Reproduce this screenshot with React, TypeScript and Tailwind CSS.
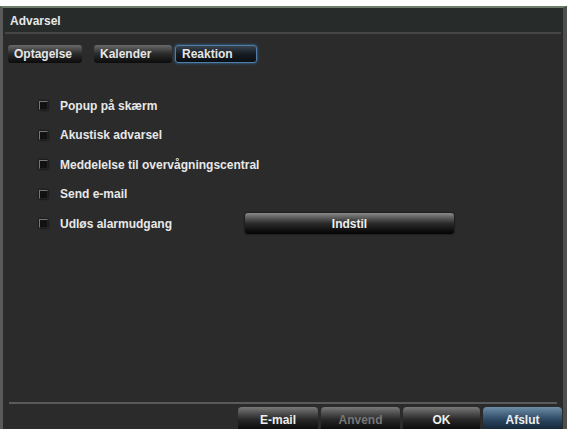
import React from "react";

const font = { fontFamily: '"Liberation Sans", Arial, sans-serif' };

function Check({ label }: { label: string }) {
  return (
    <div className="flex items-center h-[29.5px]">
      <div className="w-[9px] h-[9px] bg-[#111] border-t border-l border-[#777] border-r border-b border-r-[#222] border-b-[#222] shadow-[0_0_2px_#000]" />
      <span className="ml-[12px] text-[12px] font-bold text-[#e8e8e8]">{label}</span>
    </div>
  );
}

function Tab({ label, w, active }: { label: string; w: string; active?: boolean }) {
  return (
    <div
      className={
        w +
        " h-[18px] flex items-center pl-[6px] rounded-[3px] text-[12px] font-bold text-[#e6e6e6] " +
        (active
          ? "bg-gradient-to-b from-[#3a4450] via-[#161c22] to-[#0a0f14] border border-[#4f7fa8] shadow-[0_0_3px_#3a78b0]"
          : "bg-gradient-to-b from-[#6a6a6a] via-[#2a2a2a] to-[#0c0c0c]")
      }
    >
      {label}
    </div>
  );
}

function Btn({ label, w, variant }: { label: string; w: string; variant?: "dis" | "blue" }) {
  const bg =
    variant === "blue"
      ? "bg-gradient-to-b from-[#6f8ea8] via-[#2a4660] to-[#0e1c2a]"
      : "bg-gradient-to-b from-[#7a7a7a] via-[#262626] to-[#050505]";
  return (
    <div
      className={
        w +
        " h-[26px] rounded-t-[4px] flex items-center justify-center text-[12px] font-bold " +
        bg +
        (variant === "dis" ? " text-[#777]" : " text-[#eeeeee]")
      }
    >
      {label}
    </div>
  );
}

export default function App() {
  return (
    <div style={font} className="w-[567px] h-[429px] bg-white flex flex-col overflow-hidden">
      <div className="h-[6px] bg-white shrink-0" />
      <div className="flex-1 flex flex-col bg-[#2b2b2b] border-t-[2px] border-t-[#6d7d6a] border-l-[3px] border-l-[#5a5a5a] border-r-[4px] border-r-[#4c4f4c] overflow-hidden">
        <div className="h-[24px] shrink-0 flex items-center pl-[7px] pt-[2px] bg-[#272b29] text-[12px] font-bold text-[#e8e8e8]">
          Advarsel
        </div>
        <div className="h-[2px] shrink-0 bg-[#454745] mx-[2px]" />
        <div className="flex items-center pl-[5px] mt-[11px] shrink-0">
          <Tab label="Optagelse" w="w-[74px]" />
          <div className="w-[12px]" />
          <Tab label="Kalender" w="w-[78px]" />
          <div className="w-[3px]" />
          <Tab label="Reaktion" w="w-[82px]" active />
        </div>
        <div className="flex flex-col pl-[36px] mt-[28px] shrink-0 relative">
          <Check label="Popup på skærm" />
          <Check label="Akustisk advarsel" />
          <Check label="Meddelelse til overvågningscentral" />
          <Check label="Send e-mail" />
          <div className="flex items-center">
            <Check label="Udløs alarmudgang" />
            <div className="ml-[73px] w-[209px] h-[21px] rounded-[3px] bg-gradient-to-b from-[#8a8a8a] via-[#2a2a2a] to-[#050505] flex items-center justify-center text-[12px] font-bold text-[#eeeeee] shadow-[0_0_2px_#000]">
              Indstil
            </div>
          </div>
        </div>
        <div className="flex-1" />
        <div className="h-[2px] shrink-0 bg-[#5a5a5a] mx-[6px]" />
        <div className="flex justify-end gap-[3px] pr-[1px] mt-[3px] shrink-0 h-[22px] items-start">
          <Btn label="E-mail" w="w-[80px]" />
          <Btn label="Anvend" w="w-[79px]" variant="dis" />
          <Btn label="OK" w="w-[77px]" />
          <Btn label="Afslut" w="w-[79px]" variant="blue" />
        </div>
      </div>
    </div>
  );
}
